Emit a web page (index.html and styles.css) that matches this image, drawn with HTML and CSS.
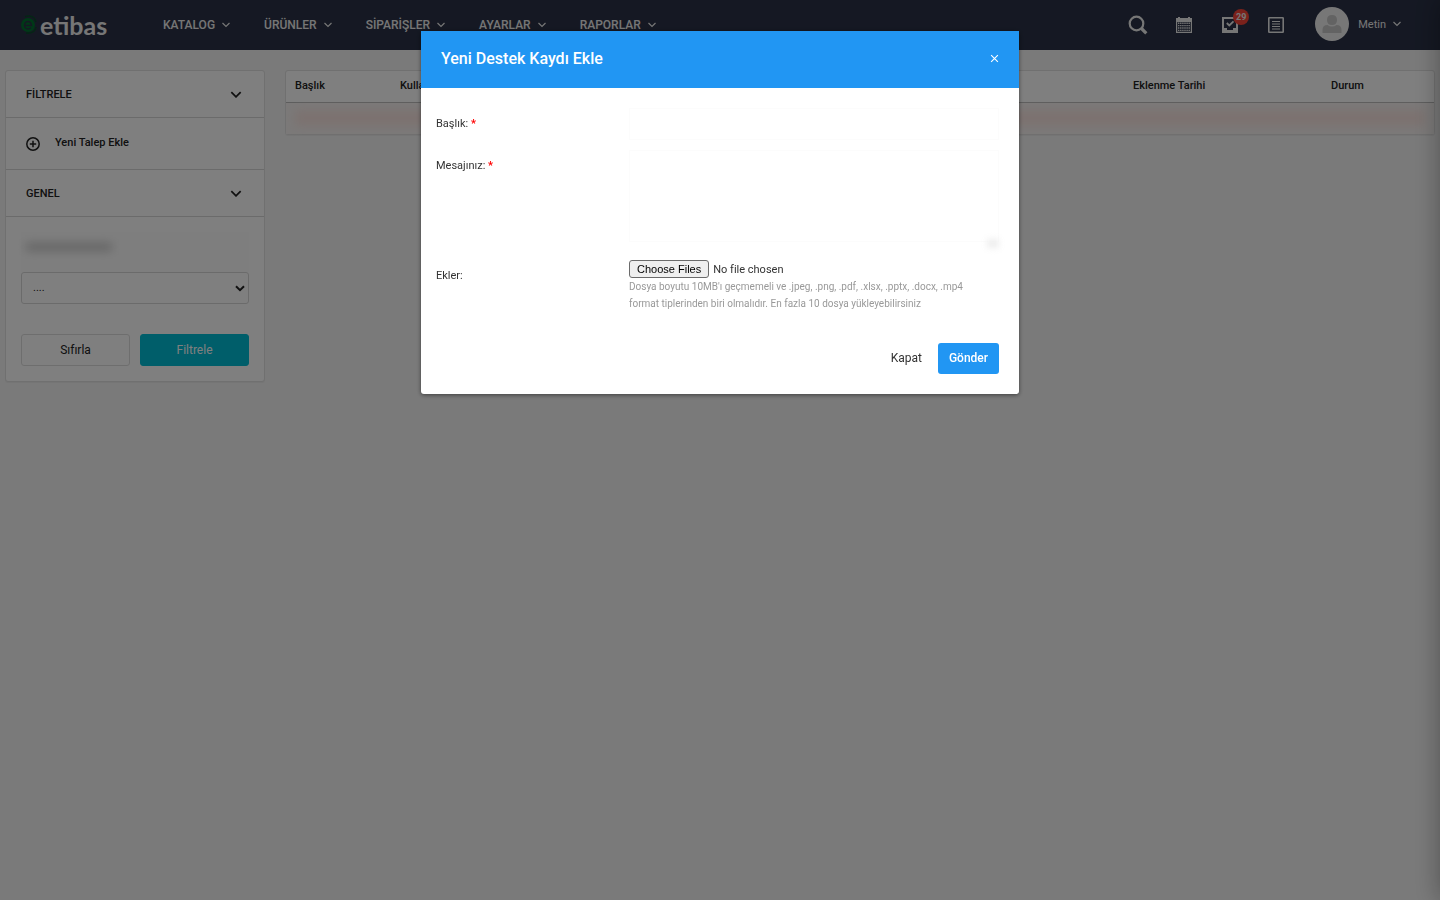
FILE: index.html
```html
<!DOCTYPE html>
<html lang="tr">
<head>
<meta charset="utf-8">
<meta name="viewport" content="width=device-width, initial-scale=1">
<title>Destek</title>
<link rel="stylesheet" href="styles.css">
</head>
<body>
<svg class="sprite" aria-hidden="true">
  <symbol id="chevron" viewBox="0 0 10 6"><path d="M1.500 1l3.500 3.500L8.500 1" fill="none" stroke="currentColor" stroke-width="1.200"/></symbol>
  <symbol id="chevron-bold" viewBox="0 0 10 6"><path d="M1 1l4 4 4-4" fill="none" stroke="currentColor" stroke-width="1.500"/></symbol>
</svg>

<header class="topbar">
  <a class="logo" href="#">
    <svg class="logo-mark" viewBox="0 0 18 22" aria-hidden="true">
      <path d="M5 2.500Q14 0 16 8M16 13Q15 20 6 19" fill="none" stroke="#0a4a2b" stroke-width="1.500"/>
      <circle cx="8" cy="11" r="7" fill="#00702f"/>
      <path d="M4.500 11.500h7q-.5-4-3.500-4T4.500 11.500q.5 3.500 3.500 3.500 1.800 0 3-1.200" fill="none" stroke="#2a3146" stroke-width="1.400"/>
    </svg>
    <span>etibas</span>
  </a>
  <nav class="menu">
    <a href="#">KATALOG <svg class="chev"><use href="#chevron"/></svg></a>
    <a href="#">ÜRÜNLER <svg class="chev"><use href="#chevron"/></svg></a>
    <a href="#">SİPARİŞLER <svg class="chev"><use href="#chevron"/></svg></a>
    <a href="#">AYARLAR <svg class="chev"><use href="#chevron"/></svg></a>
    <a href="#">RAPORLAR <svg class="chev"><use href="#chevron"/></svg></a>
  </nav>
  <div class="tools">
    <button class="tool search" type="button" aria-label="Ara">
      <svg viewBox="0 0 20 20"><circle cx="8.500" cy="8.500" r="6.800" fill="none" stroke="currentColor" stroke-width="2.200"/><path d="M13.500 13.500l4.800 4.800" stroke="currentColor" stroke-width="3.200"/></svg>
    </button>
    <button class="tool" type="button" aria-label="Takvim">
      <svg viewBox="0 0 16 16"><path fill="currentColor" fill-rule="evenodd" d="M0 1h2V0h2v1h8V0h2v1h2v15H0zM1.200 5v9.800h13.600V5z"/><path d="M2 6.200h12M2 8.600h12M2 11h12M2 13.400h12" stroke="currentColor" stroke-width="1.400" stroke-dasharray="1.400 .7"/></svg>
    </button>
    <button class="tool" type="button" aria-label="Görevler">
      <svg viewBox="0 0 16 16"><path fill="currentColor" fill-rule="evenodd" d="M0 0h16v16H0zM2 2v9h3v2h6v-2h3V2z"/><path d="M4.800 6l2.500 2.500L11.500 4.300" fill="none" stroke="currentColor" stroke-width="1.800"/></svg>
      <span class="badge">29</span>
    </button>
    <button class="tool" type="button" aria-label="Kayıtlar">
      <svg viewBox="0 0 16 16"><rect x=".8" y=".8" width="14.400" height="14.400" rx=".5" fill="none" stroke="currentColor" stroke-width="1.600"/><path d="M4 4.500h8M4 7h8M4 9.500h8M4 12h8" stroke="currentColor" stroke-width="1.200"/></svg>
    </button>
    <button class="user" type="button">
      <svg class="avatar" viewBox="0 0 34 34" aria-hidden="true"><circle cx="17" cy="17" r="17" fill="#efefef"/><path fill="#c6c6c6" d="M12 13q0-5 5-5t5 5q0 5-5 5t-5-5zM7.500 26v-3q0-5 5-5 2 1.500 4.500 1.500t4.500-1.500q5 0 5 5v3z"/></svg>
      <span class="user-name">Metin</span>
      <svg class="chev"><use href="#chevron"/></svg>
    </button>
  </div>
</header>

<main class="page">
  <aside class="panel sidebar">
    <button class="section" type="button">FİLTRELE <svg class="chev-bold"><use href="#chevron-bold"/></svg></button>
    <a class="add" href="#">
      <svg class="add-icon" viewBox="0 0 14 14" aria-hidden="true"><circle cx="7" cy="7" r="6.200" fill="none" stroke="currentColor" stroke-width="1.500"/><path d="M7 3.800v6.400M3.800 7h6.400" stroke="currentColor" stroke-width="1.500"/></svg>
      <span>Yeni Talep Ekle</span>
    </a>
    <button class="section" type="button">GENEL <svg class="chev-bold"><use href="#chevron-bold"/></svg></button>
    <form class="filters">
      <div class="masked"><span class="smudge"></span></div>
      <div class="select-wrap">
        <select aria-label="Durum"><option>....</option></select>
        <svg class="select-arrow" viewBox="0 0 10 7" aria-hidden="true"><path d="M1 1.200l4 4 4-4" fill="none" stroke="currentColor" stroke-width="2"/></svg>
      </div>
      <div class="filter-buttons">
        <button class="btn reset" type="reset">Sıfırla</button>
        <button class="btn apply" type="button">Filtrele</button>
      </div>
    </form>
  </aside>

  <section class="panel list">
    <table>
      <colgroup><col class="c-title"><col class="c-user"><col class="c-date"><col class="c-state"></colgroup>
      <thead><tr><th>Başlık</th><th>Kullanıcı</th><th>Eklenme Tarihi</th><th>Durum</th></tr></thead>
      <tbody><tr><td colspan="4"><div class="row-blur"></div></td></tr></tbody>
    </table>
  </section>
</main>

<div class="drawer"></div>
<div class="backdrop">
  <div class="modal" role="dialog" aria-modal="true" aria-labelledby="modal-title">
    <div class="modal-head">
      <h2 id="modal-title">Yeni Destek Kaydı Ekle</h2>
      <button class="close" type="button" aria-label="Kapat"><svg viewBox="0 0 8 8"><path d="M1 1l6 6M7 1L1 7" stroke="currentColor" stroke-width="1"/></svg></button>
    </div>
    <form>
      <div class="fields">
        <label for="subject">Başlık: <b>*</b></label>
        <input class="soft subject" id="subject" type="text">
        <label for="message">Mesajınız: <b>*</b></label>
        <div class="message-wrap"><textarea class="soft message" id="message"></textarea><span class="grip"></span></div>
        <label class="files-label" for="files">Ekler:</label>
        <div class="files">
          <input id="files" type="file" multiple>
          <p>Dosya boyutu 10MB'ı geçmemeli ve .jpeg, .png, .pdf, .xlsx, .pptx, .docx, .mp4 format tiplerinden biri olmalıdır. En fazla 10 dosya yükleyebilirsiniz</p>
        </div>
      </div>
      <div class="modal-foot">
        <button class="plain" type="button">Kapat</button>
        <button class="send" type="button">Gönder</button>
      </div>
    </form>
  </div>
</div>
</body>
</html>
```
FILE: styles.css
```css
* { box-sizing: border-box; }
body {
  margin: 0;
  min-height: 100vh;
  background: #f5f5f5;
  color: #333;
  font: 11px/16px Roboto, sans-serif;
}
button, input, select, textarea { font: inherit; color: inherit; }
button { border: 0; padding: 0; background: none; }
a { color: inherit; text-decoration: none; }
.sprite { display: none; }
.chev { width: 10px; height: 6px; }
.chev-bold { width: 12px; height: 7px; }

.topbar {
  display: flex;
  align-items: center;
  height: 50px;
  padding: 0 38px 0 20px;
  background: #2a3146;
  color: #ececec;
}
.logo {
  display: flex;
  align-items: center;
  gap: 2px;
  width: 143px;
  font: 700 25px/30px Lato, sans-serif;
}
.logo-mark { width: 18px; height: 22px; }
.menu { display: flex; gap: 33px; font-size: 12px; font-weight: 500; }
.menu a { display: flex; align-items: center; gap: 6px; white-space: nowrap; }
.tools { display: flex; align-items: center; gap: 30px; margin-left: auto; }
.tool { position: relative; width: 16px; height: 16px; }
.tool svg { display: block; width: 100%; height: 100%; }
.search { width: 20px; height: 20px; margin-right: -2px; }
.badge {
  position: absolute;
  top: -8px;
  left: 11px;
  width: 16px;
  height: 16px;
  border-radius: 50%;
  background: #f44336;
  font-size: 9px;
  font-weight: 700;
}
.user { display: flex; align-items: center; gap: 6px; margin-left: 1px; padding-bottom: 2px; }
.user-name { padding-top: 2px; }
.avatar { width: 34px; height: 34px; margin-right: 3px; }

.page { display: flex; align-items: flex-start; gap: 20px; padding: 20px 5px 20px; }
.panel {
  background: #fff;
  border: 1px solid #e0e0e0;
  border-radius: 3px;
  box-shadow: 0 1px 1px rgba(0, 0, 0, .05);
}
.sidebar { flex: 0 0 260px; color: #222; }
.section {
  display: flex;
  align-items: center;
  justify-content: space-between;
  width: 100%;
  height: 47px;
  padding: 1px 22px 0 20px;
  border-bottom: 1px solid #d6d6d6;
  font-weight: 500;
}
.add {
  display: flex;
  align-items: center;
  gap: 15px;
  height: 52px;
  padding: 0 20px;
  border-bottom: 1px solid #d6d6d6;
  font-weight: 500;
}
.add span { padding-bottom: 2px; }
.add-icon { width: 14px; height: 14px; }
.filters { padding: 15px; }
.masked { height: 40px; padding: 11px 5px; background: #fdfdfd; }
.smudge { display: block; width: 86px; height: 8px; background: #c9c9c9; filter: blur(5px); }
.select-wrap { position: relative; }
select {
  display: block;
  appearance: none;
  width: 100%;
  height: 32px;
  padding: 0 11px;
  border: 1px solid #d6d6d6;
  border-radius: 3px;
  background: #fff;
}
.select-arrow { position: absolute; right: 4px; top: 13px; width: 10px; height: 7px; pointer-events: none; }
.filter-buttons { display: flex; gap: 10px; margin-top: 30px; }
.btn { flex: 1; height: 32px; border: 1px solid #ddd; border-radius: 3px; font-size: 12px; }
.apply { border-color: #00bcd4; background: #00bcd4; color: #fff; }

.list { flex: 1; min-width: 0; }
table { width: 100%; table-layout: fixed; border-collapse: collapse; }
.c-title { width: 105px; }
.c-date { width: 198px; }
.c-state { width: 112px; }
th {
  height: 31px;
  padding: 0 9px 1px;
  border-bottom: 1px solid #bbb;
  color: #222;
  font-weight: 500;
  text-align: left;
}
td { height: 32px; padding: 0; background: #f7f3f2; }
.row-blur { height: 16px; margin: 0 9px; background: #f8e4e0; filter: blur(5px); }

.drawer { position: fixed; top: 0; bottom: 0; left: 100%; width: 260px; box-shadow: 0 0 24px rgba(0, 0, 0, .35); }
.backdrop { position: fixed; inset: 0; padding: 31px 10px; background: rgba(0, 0, 0, .5); }
.modal {
  max-width: 598px;
  margin: 0 auto;
  border-radius: 3px;
  background: #fff;
  box-shadow: 0 1px 4px rgba(0, 0, 0, .5);
}
.modal-head {
  display: flex;
  align-items: center;
  justify-content: space-between;
  height: 57px;
  padding: 0 20px 2px;
  background: #2196f3;
  color: #fff;
}
.modal-head h2 { margin: 0; font-size: 16px; font-weight: 500; line-height: 24px; }
.close { width: 9px; height: 9px; }
.close svg { display: block; width: 9px; height: 9px; }
.fields {
  display: grid;
  grid-template-columns: 178px 1fr;
  column-gap: 15px;
  row-gap: 10px;
  padding: 20px 20px 0 15px;
}
.fields label { padding-top: 8px; }
.fields b { color: #f00; }
.soft { display: block; width: 100%; border: 1px solid #fcfcfc; background: #fff; outline: 0; }
.subject { height: 32px; }
.message { height: 92px; resize: none; }
.message-wrap { position: relative; }
.grip { position: absolute; right: 0; bottom: -6px; width: 12px; height: 9px; background: #eee; filter: blur(3px); }
.files { padding-top: 8px; }
.fields .files-label { padding-top: 16px; }
.files input { display: block; width: 100%; height: 18px; }
.files input::file-selector-button {
  height: 18px;
  margin: 0 4px 0 0;
  padding: 0 7px;
  border: 1px solid #6b6b6b;
  border-radius: 3px;
  background: #efefef;
  color: #000;
  font: 11px/14px "Liberation Sans", sans-serif;
}
.files p { margin: 0; padding-right: 20px; color: #999; font-size: 10px; line-height: 17px; }
.modal-foot { display: flex; justify-content: flex-end; gap: 5px; padding: 31px 20px 20px; font-size: 12px; }
.modal-foot button { height: 31px; padding: 0 11px 1px; border-radius: 3px; }
.send { background: #2196f3; color: #fff; font-weight: 500; }
```
